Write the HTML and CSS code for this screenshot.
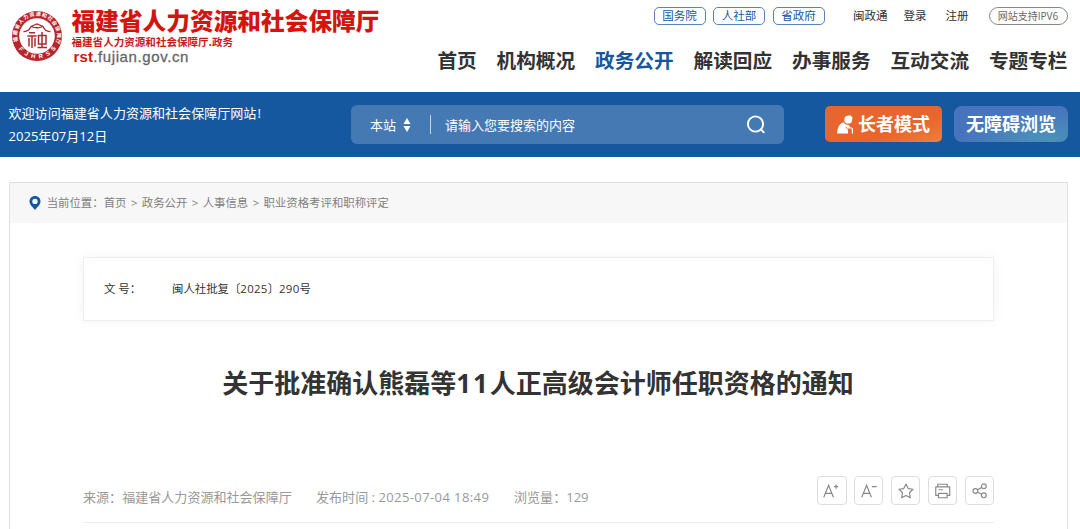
FILE: index.html
```html
<!DOCTYPE html>
<html lang="zh-CN">
<head>
<meta charset="utf-8">
<title>福建省人力资源和社会保障厅</title>
<link rel="stylesheet" href="styles.css">
</head>
<body>
<header class="header">
  <a class="brand">
    <svg class="emblem" viewBox="0 0 52 52" width="52" height="52">
      <defs>
        <path id="arc-top" d="M6.800 31.500A20 20 0 1 1 45.200 31.500"/>
        <path id="arc-bottom" d="M6 36.500A22.600 22.600 0 0 0 46 36.500"/>
      </defs>
      <circle cx="26" cy="26" r="25" fill="#b9242b"/>
      <circle cx="26" cy="26" r="17.800" fill="#fff"/>
      <text class="emblem-ring"><textPath href="#arc-top" textLength="76">福建省人力资源和社会保障厅</textPath></text>
      <text class="emblem-ring emblem-latin"><textPath href="#arc-bottom" startOffset="3" textLength="44">FJHRSS</textPath></text>
      <path d="M12.500 21.500Q17.500 22 20 16.500L26 14L32 16.500Q34.500 22 39.500 21.500M20 16.500Q26 19 32 16.500" fill="none" stroke="#a82b30" stroke-width="1.300"/>
      <path d="M18 22.800h6M16.300 26h9.400M18 28v8.500M21 26v12M24 28v8.500M31 22v15.500M27.500 25.500h7.500v8.500h-7.500ZM26.500 37.500h9.500" fill="none" stroke="#a82b30" stroke-width="1.500"/>
    </svg>
    <span class="brand-text">
      <span class="brand-name">福建省人力资源和社会保障厅</span>
      <span class="brand-sub">福建省人力资源和社会保障厅.政务</span>
      <span class="brand-url"><b>rst</b>.fujian.gov.cn</span>
    </span>
  </a>
  <div class="header-right">
    <div class="top-links">
      <a class="pill">国务院</a><a class="pill">人社部</a><a class="pill">省政府</a>
      <a class="link link-first">闽政通</a><a class="link">登录</a><a class="link link-last">注册</a>
      <a class="ipv6">网站支持IPV6</a>
    </div>
    <nav class="nav">
      <a>首页</a><a>机构概况</a><a class="active">政务公开</a><a>解读回应</a><a>办事服务</a><a>互动交流</a><a>专题专栏</a>
    </nav>
  </div>
</header>

<section class="banner">
  <div class="welcome"><div>欢迎访问福建省人力资源和社会保障厅网站<span class="bang">!</span></div><div>2025年07月12日</div></div>
  <div class="search">
    <span class="scope">本站</span>
    <svg class="sort" width="8" height="14" viewBox="0 0 8 14"><path d="M4 0L7.500 6H.500ZM.500 8h7L4 14Z" fill="#fff"/></svg>
    <span class="divider"></span>
    <span class="placeholder">请输入您要搜索的内容</span>
    <svg class="magnifier" width="20" height="20" viewBox="0 0 20 20"><g fill="none" stroke="#fff" stroke-width="1.900"><circle cx="9.500" cy="9" r="7.600"/><path d="M15 14.500l2.800 2.800" stroke-linecap="round"/></g></svg>
  </div>
  <a class="mode elder">
    <svg width="17" height="19" viewBox="0 0 17 19"><g fill="#fff"><circle cx="11.200" cy="4.700" r="3.900"/><path d="M8.500 1.200L13.500.200L15.800 3L14.500 4.500ZM0 18.500Q.200 9.500 6.300 7.200Q8.500 10.300 11.500 10L13.500 12.200L10.800 13L8 11.500L11 15V18.500Z"/></g><path d="M10 13h4.200q1.200 0 1.200 1.200v4.300" fill="none" stroke="#fff" stroke-width="1.200"/></svg>
    <span>长者模式</span>
  </a>
  <a class="mode access">无障碍浏览</a>
</section>

<main class="panel">
  <div class="crumbs">
    <svg width="12" height="14" viewBox="0 0 12 14"><path fill="#1658a0" fill-rule="evenodd" d="M6 0C9.200 0 11.500 2.300 11.500 5.400C11.500 8.600 8 11.200 6 14C4 11.200.500 8.600.500 5.400C.500 2.300 2.800 0 6 0ZM6 2.700A2.700 2.700 0 1 0 6 8.100A2.700 2.700 0 1 0 6 2.700Z"/></svg>
    <span class="crumb-label">当前位置：</span><a>首页</a><i>&gt;</i><a>政务公开</a><i>&gt;</i><a>人事信息</a><i>&gt;</i><a>职业资格考评和职称评定</a>
  </div>
  <article class="article">
    <div class="doc-no"><span class="doc-label">文 号：</span><span>闽人社批复〔<span class="digits">2025</span>〕<span class="digits">290</span>号</span></div>
    <h1 class="title">关于批准确认熊磊等<span class="count">11</span>人正高级会计师任职资格的通知</h1>
    <div class="meta">
      <span class="source">来源：福建省人力资源和社会保障厅</span>
      <span class="date">发布时间 : <span class="stamp">2025-07-04 18:49</span></span>
      <span class="views">浏览量：129</span>
      <div class="tools">
        <a class="tool"><svg viewBox="0 0 28 28"><path d="M6 21L11 8.500L16 21M7.800 17h6.400M16.500 10h4.500M18.750 7.750v4.500"/></svg></a>
        <a class="tool"><svg viewBox="0 0 28 28"><path d="M7 21L12 8.500L17 21M8.800 17h6.400M17.500 10h5"/></svg></a>
        <a class="tool"><svg viewBox="0 0 28 28"><path stroke-linejoin="round" d="M14.500 7.300l2.300 4.700 4.900.700-3.600 3.600.900 5.200-4.500-2.400L10 21.500l.900-5.200-3.600-3.600 4.900-.700Z"/></svg></a>
        <a class="tool"><svg viewBox="0 0 28 28"><path stroke-linejoin="round" d="M9 10.300V7.500h10V10.300M9.500 19H7V10.300h14.500V19h-2.500M9.800 17h9v4.500h-9ZM10 13.200h4.500"/></svg></a>
        <a class="tool"><svg viewBox="0 0 28 28"><circle cx="9.700" cy="14.500" r="2.500"/><circle cx="18.500" cy="9.700" r="2.500"/><circle cx="18.500" cy="19" r="2.500"/><path d="M12 13.300l4.200-2.400M12 15.700l4.200 2.200"/></svg></a>
      </div>
    </div>
  </article>
</main>
</body>
</html>
```
FILE: styles.css
```css
* { box-sizing: border-box; }
body {
  margin: 0;
  height: 529px;
  overflow: hidden;
  background: #fff;
  color: #333;
  font-family: "Open Sans", "Noto Sans CJK SC", sans-serif;
}
svg { display: block; flex: none; }
a, span { white-space: nowrap; }

.header { display: flex; justify-content: space-between; height: 92px; padding: 0 12.500px 0 11px; }
.brand { display: flex; padding-top: 10px; }
.emblem-ring { font: 700 5.200px "Noto Sans CJK SC", sans-serif; fill: #fff; }
.emblem-latin { font: 700 6px "Liberation Sans", sans-serif; }
.brand-text { display: flex; flex-direction: column; margin: -3px 0 0 8.500px; }
.brand-name { font: 900 23.700px/27px "Noto Sans CJK SC", sans-serif; color: #d31510; }
.brand-sub { font: 700 10.550px/15px "Noto Sans CJK SC", sans-serif; color: #c9191b; }
.brand-url { padding-left: 2px; font: 15px/15px "Liberation Sans", sans-serif; color: #666; letter-spacing: .600px; -webkit-text-stroke: .3px #666; }
.brand-url b { color: #d31510; letter-spacing: .200px; -webkit-text-stroke: 0; }

.header-right { display: flex; flex-direction: column; align-items: flex-end; padding-top: 7px; }
.top-links { display: flex; align-items: center; height: 18px; font-size: 11.500px; line-height: 16px; }
.pill { width: 52px; height: 18px; margin-right: 7.500px; border: 1px solid #5585ba; border-radius: 5px; color: #1658a0; text-align: center; }
.link-first { margin-left: 21px; }
.link { margin-right: 16px; }
.link:not(.link-first):not(.link-last) { margin-right: 19px; }
.link-last { margin-right: 20px; }
.ipv6 { width: 79px; height: 18px; border: 1px solid #888; border-radius: 9px; color: #666; font-size: 10px; line-height: 17px; text-align: center; }
.nav { display: flex; gap: 19.900px; margin-top: 20px; font-size: 19.650px; font-weight: 700; line-height: 32px; }
.nav .active { color: #1658a0; }

.banner { display: flex; align-items: center; height: 65px; padding: 0 12px 0 8.500px; background: #1658a0; color: #fff; }
.welcome { width: 342.500px; font-size: 13.050px; line-height: 23px; }
.bang { margin-left: 1px; }
.search { display: flex; align-items: center; width: 433px; height: 39px; padding: 0 18px 0 19px; border-radius: 6px; background: #4579b3; font-size: 13px; line-height: 18px; }
.sort { margin-left: 7px; }
.divider { width: 1px; height: 19px; margin: 0 14px 0 19px; background: #c7d7e8; }
.magnifier { margin-left: auto; }
.mode { display: flex; align-items: center; justify-content: center; height: 36px; margin-top: -1px; font-size: 18px; font-weight: 700; line-height: 26px; }
.elder { gap: 4px; width: 117px; margin-left: 41px; border-radius: 5px; background: linear-gradient(160deg, #e8652e 65%, #ec8040); }
.access { width: 114px; margin-left: 12px; border-radius: 8px; background: radial-gradient(ellipse at 80% 90%, #4b92b9, #4774bd 65%); }

.panel { width: 1059px; height: 360px; margin: 25px 0 0 9px; border: 1px solid #e0e0e0; border-bottom: 0; }
.crumbs { display: flex; align-items: center; height: 40px; padding-left: 19px; background: #f7f7f7; color: #808080; font-size: 11.400px; line-height: 18px; }
.crumb-label { width: 57px; margin-left: 5.700px; }
.crumbs i { width: 15.300px; font-style: normal; text-align: center; }
.article { width: 911px; margin: 33.500px 0 0 73px; }
.doc-no { display: flex; align-items: center; height: 64px; padding-left: 20px; border: 1px solid #eee; box-shadow: 0 0 12px rgba(0, 0, 0, .05); font-size: 11.400px; line-height: 18px; }
.doc-label { width: 68px; }
.digits { letter-spacing: .300px; }
.title { margin: 43px 0 0 -1px; font-size: 26px; font-weight: 700; line-height: 38px; text-align: center; white-space: nowrap; }
.count { letter-spacing: 1.900px; }
.meta { display: flex; align-items: center; height: 64px; margin-top: 57px; padding-bottom: 0; border-bottom: 1px solid #eee; color: #999; font-size: 13.050px; line-height: 20px; }
.meta > span { padding-top: 14px; }
.source { width: 233px; }
.date { width: 198px; }
.stamp { letter-spacing: .380px; }
.tools { display: flex; gap: 7.700px; margin-left: auto; }
.tool { width: 29.200px; height: 29px; border: 1px solid #ddd; border-radius: 4px; }
.tool svg { width: 27px; height: 27px; fill: none; stroke: #888; stroke-width: 1.200; }
```
